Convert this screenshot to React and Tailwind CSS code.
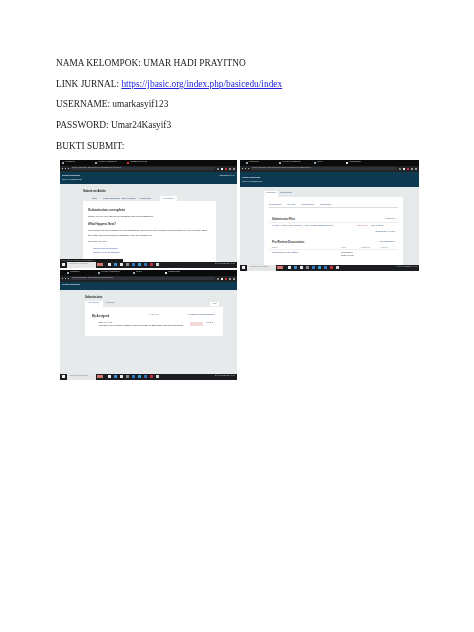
function TabBar({ pad, tabs }) {
  return (
    <div className={`flex h-[6px] items-center bg-[#0b0b0b] text-[2.4px] leading-none text-[#d4d4d4] ${pad}`}>
      {tabs.map((t, i) => (
        <span key={i} className={`flex items-center gap-[1px] overflow-hidden ${t.w}`}>
          <span className={`h-[2px] w-[2px] shrink-0 ${t.c}`} />
          <span className="truncate">{t.label}</span>
        </span>
      ))}
    </div>
  );
}

function AddressBar({ url }) {
  return (
    <div className="flex h-[6px] items-center gap-[2px] bg-[#212427] px-[2px]">
      <span className="h-[1px] w-[1px] bg-[#bbb]" />
      <span className="h-[1px] w-[1px] bg-[#bbb]" />
      <span className="h-[1px] w-[1px] bg-[#bbb]" />
      <div className="flex h-[3px] flex-1 items-center bg-[#303438] px-[1px] text-[2.4px] leading-none text-[#c4c4c4]">{url}</div>
      <span className="h-[2px] w-[2px] bg-[#888]" />
      <span className="h-[2px] w-[2px] bg-[#eeeeee]" />
      <span className="h-[2px] w-[2px] bg-[#d0303a]" />
      <span className="h-[2px] w-[2px] bg-[#999]" />
      <span className="h-[2px] w-[2px] bg-[#999]" />
    </div>
  );
}

function Taskbar() {
  const icons = ["bg-[#e9edf2]", "bg-[#3f8fd0]", "bg-[#e8e8e8]", "bg-[#8d8d8d]", "bg-[#2f78c4]", "bg-[#3aa0d8]", "bg-[#3d6fb5]", "bg-[#c4313a]", "bg-[#d9d9d9]"];
  return (
    <div className="flex h-[6px] shrink-0 items-center bg-[#1b1d20]">
      <span className="mx-[2px] h-[3px] w-[3px] bg-[#f2f2f2]" />
      <div className="flex h-full w-[29px] items-center bg-[#e4e6e8] pl-[2px] text-[2.4px] leading-none text-[#666]">
        Type here to search
      </div>
      <span className="mx-[1px] h-[3px] w-[6px] bg-[#d2756c]" />
      <div className="flex flex-1 items-center gap-[3px] pl-[4px]">
        {icons.map((c, i) => (
          <span key={i} className={`h-[3px] w-[3px] ${c}`} />
        ))}
      </div>
      <span className="pr-[2px] text-[2.4px] leading-none text-[#ddd]">27°C Berawan 11:36</span>
    </div>
  );
}

function ShotOne() {
  const tabs = ["Start", "Upload Submission", "Enter Metadata", "Confirmation", "Next Steps"];
  return (
    <div className="relative flex h-[108px] w-[177px] flex-col overflow-hidden bg-[#e7eaea]">
      <TabBar pad="pl-[2px]" tabs={[
        { label: "Dashboard", w: "w-[33px]", c: "bg-[#9ab]" },
        { label: "Wizard: Submission", w: "w-[32px]", c: "bg-[#9ab]" },
        { label: "Submission Steps", w: "w-[34px]", c: "bg-[#d33]" },
      ]} />
      <AddressBar url="jbasic.org/index.php/basicedu/submission/wizard/5" />
      <div className="flex h-[12px] flex-col justify-center bg-[#0d3a50] px-[2px] text-[#e8eef2]">
        <div className="flex items-center justify-between text-[2.6px] font-bold leading-[4px]">
          <span>Jurnal Basicedu</span>
          <span className="font-normal">umarkasyif123</span>
        </div>
        <div className="text-[2.4px] leading-[3px]">Back to Submissions</div>
      </div>
      <div className="flex flex-1 flex-col pl-[23px] pr-[21px] pt-[5px] font-['Liberation_Sans',sans-serif]">
        <div className="text-[2.8px] font-bold leading-[4px] text-[#222]">Submit an Article</div>
        <div className="mt-[2px] flex h-[6px] items-end pl-[3px]">
          {tabs.map((t, i) => (
            <span key={t} className={`flex h-[5px] w-[17px] items-center justify-center whitespace-nowrap text-[2px] leading-none text-[#2f5580] ${i === 4 ? "ml-[6px] bg-white" : ""}`}>{t}</span>
          ))}
        </div>
        <div className="flex-1 bg-white px-[5px] pt-[7.5px] text-[#333]">
          <div className="text-[3.6px] font-bold leading-[5px]">Submission complete</div>
          <div className="mt-[2px] text-[2.4px] leading-[3px]">Thank you for your interest in publishing with Jurnal Basicedu.</div>
          <div className="mt-[4px] text-[2.8px] font-bold leading-[4px]">What Happens Next?</div>
          <div className="mt-[1.5px] text-[2.4px] leading-[5px]">The journal has been notified of your submission, and you've been emailed a confirmation for your records. Once the editor has reviewed the submission, they will contact you.</div>
          <div className="mt-[2px] text-[2.4px] leading-[3px]">For now, you can:</div>
          <div className="mt-[4px] pl-[5px] text-[2.4px] leading-[4px] text-[#2f5a94]">Review this submission</div>
          <div className="pl-[5px] text-[2.4px] leading-[4px] text-[#2f5a94]">Create a new submission</div>
        </div>
      </div>
      <div className="absolute bottom-[6px] left-0 h-[3px] w-[63px] bg-[#16181a] pl-[1px] text-[2px] leading-[3px] text-[#bbb]">
        jbasic.org/index.php/basicedu/submission
      </div>
      <Taskbar />
    </div>
  );
}

function ShotTwo() {
  return (
    <div className="flex h-[111px] w-[179px] flex-col overflow-hidden bg-[#e7eaea]">
      <TabBar pad="pl-[6px]" tabs={[
        { label: "Dashboard", w: "w-[33px]", c: "bg-[#9ab]" },
        { label: "Wizard: Submission", w: "w-[35px]", c: "bg-[#9ab]" },
        { label: "Issues", w: "w-[32px]", c: "bg-[#9ab]" },
        { label: "Submissions", w: "w-[34px]", c: "bg-[#e8e8e8]" },
      ]} />
      <AddressBar url="jbasic.org/index.php/basicedu/authorDashboard/submission/5" />
      <div className="flex h-[15px] flex-col justify-center bg-[#0d3a50] px-[2px] text-[#e8eef2]">
        <div className="text-[2.6px] font-bold leading-[5px]">Jurnal Basicedu</div>
        <div className="text-[2.4px] leading-[4px]">Back to Submissions</div>
      </div>
      <div className="flex flex-1 flex-col pl-[24px] pr-[16px] pt-[4px] font-['Liberation_Sans',sans-serif]">
        <div className="flex h-[6px] items-center">
          <span className="flex h-full w-[14px] items-center justify-center bg-white text-[2.4px] leading-none text-[#2f5580]">Workflow</span>
          <span className="ml-[2px] text-[2.4px] leading-none text-[#2f5580]">Publication</span>
        </div>
        <div className="flex-1 bg-white px-[5px] pt-[6px] text-[#333]">
          <div className="flex gap-[6px] border-b-[0.5px] border-[#ddd] pb-[1px] text-[2.4px] leading-[3px] text-[#2f5580]">
            <span>Submission</span><span>Review</span><span>Copyediting</span><span>Production</span>
          </div>
          <div className="mt-[9px] flex items-center justify-between px-[3px]">
            <span className="text-[2.8px] font-bold leading-[4px]">Submission Files</span>
            <span className="text-[2.4px] leading-[3px] text-[#2f5580]">Q Search</span>
          </div>
          <div className="mt-[1px] flex items-start border-t-[0.5px] border-[#eee] px-[3px] pt-[1px] text-[2.4px] leading-[3px]">
            <span className="w-[84px] truncate text-[#2f5580]">▸ 1057 · Umar Hadi Prayitno, Artikel Jurnal Basicedu.docx</span>
            <span className="w-[15px] text-[#c0504d]">Article Text</span>
            <span className="text-[#2f5580]">Oct 2, 2024</span>
          </div>
          <div className="mt-[3px] pr-[3px] text-right text-[2.4px] leading-[3px] text-[#2f5580]">Download All Files</div>
          <div className="mt-[7px] flex items-center justify-between px-[3px]">
            <span className="text-[2.8px] font-bold leading-[4px]">Pre-Review Discussions</span>
            <span className="text-[2.4px] leading-[3px] text-[#2f5580]">Add discussion</span>
          </div>
          <div className="mt-[2px] flex border-b-[0.5px] border-[#eee] px-[3px] text-[2px] leading-[3px] text-[#777]">
            <span className="w-[69px]">Name</span>
            <span className="w-[20px]">From</span>
            <span className="w-[20px]">Last Reply</span>
            <span>Replies</span>
          </div>
          <div className="mt-[1px] flex px-[3px] text-[2.4px] leading-[3px]">
            <span className="w-[69px] text-[#2f5580]">Comments for the Editor</span>
            <span className="w-[16px]">umarkasyif 2024-10-02</span>
          </div>
        </div>
      </div>
      <Taskbar />
    </div>
  );
}

function ShotThree() {
  return (
    <div className="flex h-[110px] w-[177px] flex-col overflow-hidden bg-[#e7eaea]">
      <TabBar pad="pl-[7px]" tabs={[
        { label: "Dashboard", w: "w-[31px]", c: "bg-[#9ab]" },
        { label: "Wizard: Submission", w: "w-[35px]", c: "bg-[#9ab]" },
        { label: "Issues", w: "w-[32px]", c: "bg-[#9ab]" },
        { label: "Submissions", w: "w-[34px]", c: "bg-[#e8e8e8]" },
      ]} />
      <AddressBar url="jbasic.org/index.php/basicedu/submissions" />
      <div className="flex h-[8px] items-center bg-[#0d3a50] px-[2px] text-[2.6px] font-bold leading-none text-[#e8eef2]">Jurnal Basicedu</div>
      <div className="flex flex-1 flex-col pl-[25px] pr-[14px] pt-[5px] font-['Liberation_Sans',sans-serif]">
        <div className="text-[2.8px] font-bold leading-[4px] text-[#222]">Submissions</div>
        <div className="mt-[2px] flex h-[6px] items-center">
          <span className="flex h-full w-[18px] items-center justify-center bg-white text-[2.4px] leading-none text-[#2f5580]">My Queue</span>
          <span className="ml-[2px] text-[2.4px] leading-none text-[#2f5580]">Archives</span>
          <span className="ml-auto mr-[4px] flex h-[4px] w-[9px] items-center justify-center bg-white text-[2.2px] leading-none text-[#555]">Help</span>
        </div>
        <div className="h-[29px] bg-white pl-[7px] pr-[5px] pt-[7px] text-[#333]">
          <div className="flex items-center">
            <span className="w-[57px] text-[2.8px] font-bold leading-[4px]">My Assigned</span>
            <span className="w-[39px] text-[2.4px] leading-none text-[#888]">Q Search</span>
            <span className="text-[2.4px] leading-none text-[#2f5580]">▾ Filters  New Submission</span>
          </div>
          <div className="mt-[3px] flex items-center">
            <div className="w-[92px] truncate pl-[6px] text-[2.4px] leading-[3px]">
              <div>Hadi, U. et al.</div>
              <div className="truncate">Analysis of the Problem-Based Learning Model on Students' Learning Outcomes</div>
            </div>
            <span className="ml-[6px] h-[4px] w-[13px] bg-[#f3d9d9]" />
            <span className="ml-[3px] text-[2.4px] leading-none text-[#2f5580]">View ▾</span>
          </div>
        </div>
      </div>
      <Taskbar />
    </div>
  );
}

export default function App() {
  return (
    <div className="h-[632px] w-[474px] overflow-hidden bg-white pl-[56px] pt-[57px] font-['Liberation_Serif',serif] text-[9.35px] leading-[12px] text-[#1c1c1c]">
      <div className="flex flex-col gap-[8.65px] blur-[0.2px]">
        <p>NAMA KELOMPOK: UMAR HADI PRAYITNO</p>
        <p>LINK JURNAL: <a href="#" className="text-[#2222dd] underline">https://jbasic.org/index.php/basicedu/index</a></p>
        <p>USERNAME: umarkasyif123</p>
        <p>PASSWORD: Umar24Kasyif3</p>
        <p>BUKTI SUBMIT:</p>
      </div>
      <div className="mt-[8px] flex flex-col items-start gap-[2px] pl-[4px] blur-[0.3px]">
        <div className="flex items-start gap-[3px]">
          <ShotOne />
          <ShotTwo />
        </div>
        <div className="-mt-[3px]">
          <ShotThree />
        </div>
      </div>
    </div>
  );
}
